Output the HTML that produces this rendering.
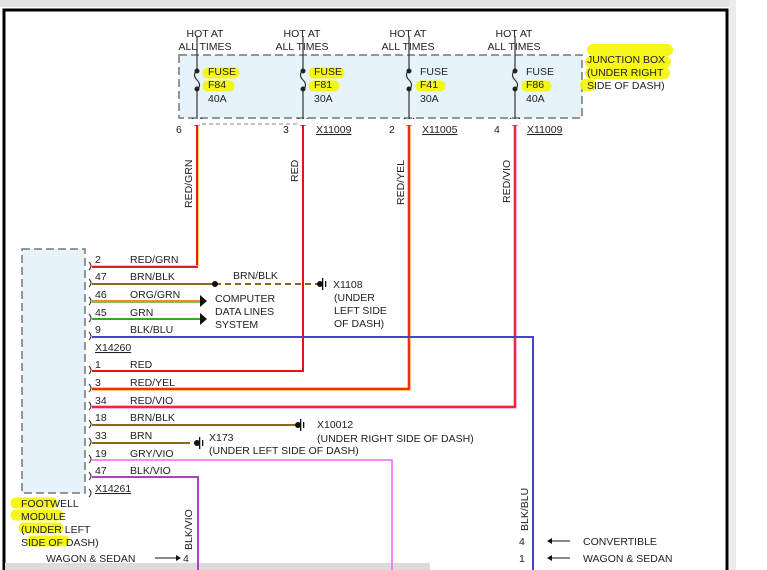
<!DOCTYPE html>
<html><head><meta charset="utf-8"><style>
html,body{margin:0;padding:0;background:#fff;width:767px;height:570px;overflow:hidden}
svg{display:block}
text{font-family:"Liberation Sans",Arial,sans-serif;font-size:10.5px;fill:#222}
</style></head><body>
<svg width="767" height="570" viewBox="0 0 767 570" xmlns="http://www.w3.org/2000/svg">
<rect x="0" y="0" width="767" height="570" fill="#fff"/>
<rect x="0" y="0" width="735" height="7" fill="#e4e4e4"/>
<rect x="729" y="0" width="7" height="570" fill="#ececec"/>
<rect x="4" y="10" width="723" height="570" fill="none" stroke="#000" stroke-width="3"/>
<rect x="5" y="563" width="425" height="7" fill="#dcdcdc"/>

<rect x="179" y="55" width="403" height="63" fill="#e6f3fb" stroke="#777" stroke-width="1.5" stroke-dasharray="8,4"/>
<rect x="22" y="249" width="63" height="244" fill="#e6f3fb" stroke="#777" stroke-width="1.5" stroke-dasharray="8,4"/>

<g fill="none" stroke="#f5f500" stroke-linecap="round" stroke-opacity="0.9">
<path d="M208 73 H234 M208 86 H229" stroke-width="11"/>
<path d="M314 73 H339 M314 86 H334" stroke-width="11"/>
<path d="M421 86 H440" stroke-width="11"/>
<path d="M527 86 H546" stroke-width="11"/>
<path d="M593 50 H667 M591 62 H665 M591 73 H664 M586 85 H590" stroke-width="12"/>
<path d="M16 503 H52 M16 515 H58 M24 528 H58 M32 541 H64" stroke-width="11"/>
</g>

<g fill="none" stroke="#333" stroke-width="1.2">
<path d="M197 36 V70 M197 90 V124 M197 70 q-5 5 0 10 q5 5 0 10"/>
<path d="M303 36 V70 M303 90 V124 M303 70 q-5 5 0 10 q5 5 0 10"/>
<path d="M409 36 V70 M409 90 V124 M409 70 q-5 5 0 10 q5 5 0 10"/>
<path d="M515 36 V70 M515 90 V124 M515 70 q-5 5 0 10 q5 5 0 10"/>
<path d="M192 118 l5 5 l5 -5 M298 118 l5 5 l5 -5 M404 118 l5 5 l5 -5 M510 118 l5 5 l5 -5"/>
<path d="M192 123 q5 5 10 0 M298 123 q5 5 10 0 M404 123 q5 5 10 0 M510 123 q5 5 10 0"/>
</g>
<rect x="192" y="119" width="10" height="6" fill="#fff"/>
<rect x="298" y="119" width="10" height="6" fill="#fff"/>
<rect x="404" y="119" width="10" height="6" fill="#fff"/>
<rect x="510" y="119" width="10" height="6" fill="#fff"/>
<path d="M202 124 H298" stroke="#888" stroke-width="1" stroke-dasharray="4,3"/>
<g fill="#222">
<circle cx="197" cy="71" r="2.5"/><circle cx="197" cy="89" r="2.5"/>
<circle cx="303" cy="71" r="2.5"/><circle cx="303" cy="89" r="2.5"/>
<circle cx="409" cy="71" r="2.5"/><circle cx="409" cy="89" r="2.5"/>
<circle cx="515" cy="71" r="2.5"/><circle cx="515" cy="89" r="2.5"/>
</g>
<g text-anchor="middle">
<text x="205" y="37">HOT AT</text><text x="205" y="50">ALL TIMES</text>
<text x="302" y="37">HOT AT</text><text x="302" y="50">ALL TIMES</text>
<text x="408" y="37">HOT AT</text><text x="408" y="50">ALL TIMES</text>
<text x="514" y="37">HOT AT</text><text x="514" y="50">ALL TIMES</text>
</g>
<text x="208" y="75">FUSE</text><text x="208" y="88">F84</text><text x="208" y="102">40A</text>
<text x="314" y="75">FUSE</text><text x="314" y="88">F81</text><text x="314" y="102">30A</text>
<text x="420" y="75">FUSE</text><text x="420" y="88">F41</text><text x="420" y="102">30A</text>
<text x="526" y="75">FUSE</text><text x="526" y="88">F86</text><text x="526" y="102">40A</text>
<text x="587" y="63">JUNCTION BOX</text><text x="587" y="76">(UNDER RIGHT</text><text x="587" y="89">SIDE OF DASH)</text>
<text x="176" y="133">6</text><text x="283" y="133">3</text><text x="389" y="133">2</text><text x="494" y="133">4</text>
<text x="316" y="133" text-decoration="underline">X11009</text>
<text x="422" y="133" text-decoration="underline">X11005</text>
<text x="527" y="133" text-decoration="underline">X11009</text>

<text transform="translate(192,208) rotate(-90)">RED/GRN</text>
<text transform="translate(298,182) rotate(-90)">RED</text>
<text transform="translate(404,205) rotate(-90)">RED/YEL</text>
<text transform="translate(510,203) rotate(-90)">RED/VIO</text>
<text transform="translate(192,550) rotate(-90)">BLK/VIO</text>
<text transform="translate(528,531) rotate(-90)">BLK/BLU</text>

<g fill="none" stroke="#333" stroke-width="1">
<path d="M89 262 q4 4 0 8 M89 279 q4 4 0 8 M89 297 q4 4 0 8 M89 314 q4 4 0 8 M89 332 q4 4 0 8 M89 366 q4 4 0 8 M89 384 q4 4 0 8 M89 402 q4 4 0 8 M89 420 q4 4 0 8 M89 438 q4 4 0 8 M89 455 q4 4 0 8 M89 472 q4 4 0 8 M89 489 q4 4 0 8"/>
</g>

<g fill="none" stroke-width="2">
<path d="M197 125 V267 H92" stroke="#e02020"/>
<path d="M198.5 125 V265.5 H92" stroke="#f5c040" stroke-width="0.8"/>
<path d="M303 125 V371 H92" stroke="#ee1111"/>
<path d="M409 125 V389 H92" stroke="#ff8800" stroke-width="3"/>
<path d="M409 125 V389 H92" stroke="#ee1111" stroke-width="1.5"/>
<path d="M515 125 V407 H92" stroke="#ff66cc" stroke-width="3"/>
<path d="M515 125 V407 H92" stroke="#ee1111" stroke-width="1.5"/>
<path d="M92 337 H533 V570" stroke="#4444cc"/>
<path d="M92 284 H215" stroke="#8a6a1a"/>
<path d="M215 284 H318" stroke="#8a6a1a" stroke-dasharray="6,4"/>
<path d="M92 301 H200" stroke="#f08a30"/>
<path d="M92 302.5 H200" stroke="#55aa33" stroke-width="0.8"/>
<path d="M92 319 H200" stroke="#33aa22"/>
<path d="M92 425 H296" stroke="#8a6a1a"/>
<path d="M92 443 H190" stroke="#8a6a1a"/>
<path d="M92 460 H392 V570" stroke="#ee66ee" stroke-width="1.5"/>
<path d="M92 477 H198 V570" stroke="#aa44bb"/>
</g>
<g fill="#111">
<circle cx="215" cy="284" r="3"/>
<path d="M200 295 l7 6 l-7 6z M200 313 l7 6 l-7 6z"/>
<circle cx="320" cy="284" r="3"/><rect x="322" y="278" width="1.3" height="12"/><rect x="325" y="281" width="1.3" height="6"/>
<circle cx="298" cy="425" r="3"/><rect x="300" y="419" width="1.3" height="12"/><rect x="303" y="422" width="1.3" height="6"/>
<circle cx="197" cy="443" r="3"/><rect x="199" y="437" width="1.3" height="12"/><rect x="202" y="440" width="1.3" height="6"/>
</g>

<g>
<text x="95" y="263">2</text><text x="130" y="263">RED/GRN</text>
<text x="95" y="280">47</text><text x="130" y="280">BRN/BLK</text>
<text x="95" y="298">46</text><text x="130" y="298">ORG/GRN</text>
<text x="95" y="316">45</text><text x="130" y="316">GRN</text>
<text x="95" y="333">9</text><text x="130" y="333">BLK/BLU</text>
<text x="95" y="351" text-decoration="underline">X14260</text>
<text x="95" y="368">1</text><text x="130" y="368">RED</text>
<text x="95" y="386">3</text><text x="130" y="386">RED/YEL</text>
<text x="95" y="404">34</text><text x="130" y="404">RED/VIO</text>
<text x="95" y="421">18</text><text x="130" y="421">BRN/BLK</text>
<text x="95" y="439">33</text><text x="130" y="439">BRN</text>
<text x="95" y="457">19</text><text x="130" y="457">GRY/VIO</text>
<text x="95" y="474">47</text><text x="130" y="474">BLK/VIO</text>
<text x="95" y="492" text-decoration="underline">X14261</text>
</g>
<text x="233" y="279">BRN/BLK</text>
<text x="215" y="302">COMPUTER</text><text x="215" y="315">DATA LINES</text><text x="215" y="328">SYSTEM</text>
<text x="333" y="288">X1108</text><text x="334" y="301">(UNDER</text><text x="334" y="314">LEFT SIDE</text><text x="334" y="327">OF DASH)</text>
<text x="317" y="428">X10012</text><text x="317" y="442">(UNDER RIGHT SIDE OF DASH)</text>
<text x="209" y="441">X173</text><text x="209" y="454">(UNDER LEFT SIDE OF DASH)</text>

<text x="21" y="507">FOOTWELL</text><text x="21" y="520">MODULE</text><text x="21" y="533">(UNDER LEFT</text><text x="21" y="546">SIDE OF DASH)</text>

<text x="46" y="562">WAGON &amp; SEDAN</text>
<path d="M155 558 H176" stroke="#111" stroke-width="1"/><path d="M176 555 l5 3 l-5 3z" fill="#111"/>
<text x="183" y="562">4</text>
<text x="519" y="545">4</text><text x="519" y="562">1</text>
<path d="M552 541 H570 M552 558 H570" stroke="#111" stroke-width="1"/>
<path d="M552 538 l-5 3 l5 3z M552 555 l-5 3 l5 3z" fill="#111"/>
<text x="583" y="545">CONVERTIBLE</text><text x="583" y="562">WAGON &amp; SEDAN</text>
</svg>
</body></html>
